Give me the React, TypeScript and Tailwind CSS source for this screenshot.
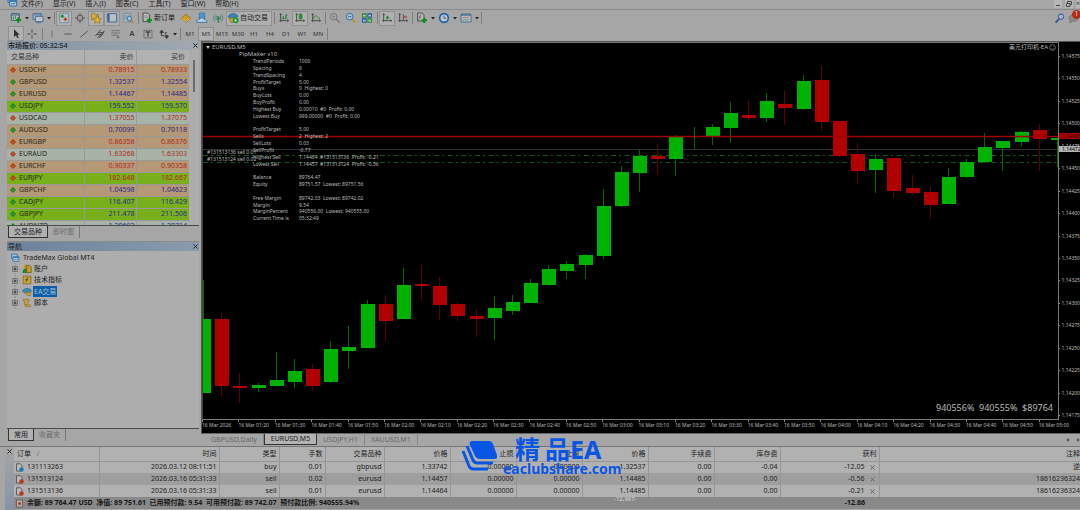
import React, { FunctionComponent, ReactNode, useState } from 'react'

type Tone = 'tan' | 'lime' | 'mist'

type Quote = {
  ask: string
  bid: string
  dir: 'up' | 'down'
  symbol: string
  tone: Tone
}

const quotes: Quote[] = [
  { symbol: 'USDCHF', bid: '0.78915', ask: '0.78933', dir: 'down', tone: 'tan' },
  { symbol: 'GBPUSD', bid: '1.32537', ask: '1.32554', dir: 'up', tone: 'tan' },
  { symbol: 'EURUSD', bid: '1.14467', ask: '1.14485', dir: 'up', tone: 'tan' },
  { symbol: 'USDJPY', bid: '159.552', ask: '159.570', dir: 'up', tone: 'lime' },
  { symbol: 'USDCAD', bid: '1.37055', ask: '1.37075', dir: 'down', tone: 'mist' },
  { symbol: 'AUDUSD', bid: '0.70099', ask: '0.70118', dir: 'up', tone: 'tan' },
  { symbol: 'EURGBP', bid: '0.86358', ask: '0.86376', dir: 'down', tone: 'tan' },
  { symbol: 'EURAUD', bid: '1.63268', ask: '1.63303', dir: 'down', tone: 'mist' },
  { symbol: 'EURCHF', bid: '0.90337', ask: '0.90358', dir: 'down', tone: 'tan' },
  { symbol: 'EURJPY', bid: '182.648', ask: '182.667', dir: 'down', tone: 'lime' },
  { symbol: 'GBPCHF', bid: '1.04598', ask: '1.04623', dir: 'up', tone: 'tan' },
  { symbol: 'CADJPY', bid: '116.407', ask: '116.429', dir: 'up', tone: 'lime' },
  { symbol: 'GBPJPY', bid: '211.478', ask: '211.506', dir: 'up', tone: 'lime' },
  { symbol: 'AUDNZD', bid: '1.20692', ask: '1.20714', dir: 'up', tone: 'mist' }
]

const tones: Record<Tone, string> = {
  lime: 'bg-[#78b01c]',
  mist: 'bg-[#a7b3a6]',
  tan: 'bg-[#b59876]'
}

const menus = [
  '文件(F)',
  '显示(V)',
  '插入(I)',
  '图表(C)',
  '工具(T)',
  '窗口(W)',
  '帮助(H)'
]

const periods = ['M1', 'M5', 'M15', 'M30', 'H1', 'H4', 'D1', 'W1', 'MN']

// wick top, body top, body bottom, wick bottom, 1 when the candle closed up
const candles = [
  [238, 277, 351, 351, 1],
  [271, 277, 344, 355, 0],
  [331, 344, 346, 361, 0],
  [341, 343, 346, 350, 1],
  [310, 338, 344, 344, 1],
  [317, 329, 340, 346, 1],
  [322, 327, 344, 349, 0],
  [299, 307, 340, 341, 1],
  [284, 305, 309, 327, 1],
  [258, 262, 306, 306, 1],
  [253, 262, 279, 299, 0],
  [226, 243, 277, 277, 1],
  [223, 242, 244, 259, 0],
  [235, 244, 263, 278, 0],
  [260, 262, 274, 279, 0],
  [267, 274, 277, 295, 0],
  [254, 266, 276, 298, 1],
  [253, 260, 269, 273, 1],
  [237, 241, 261, 261, 1],
  [223, 227, 243, 243, 1],
  [219, 222, 229, 237, 1],
  [212, 213, 223, 237, 1],
  [147, 164, 214, 217, 1],
  [124, 130, 164, 165, 1],
  [108, 114, 131, 150, 1],
  [102, 114, 117, 133, 0],
  [93, 95, 117, 134, 1],
  [85, 95, 95, 108, 1],
  [82, 85, 95, 103, 1],
  [60, 71, 86, 101, 1],
  [58, 73, 76, 78, 0],
  [51, 59, 76, 80, 1],
  [48, 62, 66, 83, 0],
  [33, 39, 67, 68, 1],
  [24, 38, 80, 89, 0],
  [79, 79, 114, 115, 0],
  [101, 112, 129, 142, 0],
  [112, 117, 128, 151, 1],
  [116, 116, 149, 156, 0],
  [133, 146, 151, 153, 0],
  [144, 150, 163, 177, 0],
  [126, 135, 162, 162, 1],
  [117, 120, 135, 136, 1],
  [91, 105, 120, 121, 1],
  [99, 99, 106, 129, 1],
  [89, 90, 100, 104, 1],
  [82, 88, 97, 129, 0],
  [96, 96, 98, 125, 1]
]

const info: [string, string][] = [
  ['TrendPeriods', '1000'],
  ['Spacing', '6'],
  ['TrendSpacing', '4'],
  ['ProfitTarget', '5.00'],
  ['Buys', '0  Highest: 0'],
  ['BuyLots', '0.00'],
  ['BuyProfit', '0.00'],
  ['Highest Buy', '0.00010  #0  Profit: 0.00'],
  ['Lowest Buy', '999.00000  #0  Profit: 0.00'],
  ['', ''],
  ['ProfitTarget', '5.00'],
  ['Sells', '2  Highest: 2'],
  ['SellLots', '0.03'],
  ['SellProfit', '-0.77'],
  ['Highest Sell', '1.14464  #131513136  Profit: -0.21'],
  ['Lowest Sell', '1.14457  #131513124  Profit: -0.56'],
  ['', ''],
  ['Balance', '89764.47'],
  ['Equity', '89751.57  Lowest: 89751.56'],
  ['', ''],
  ['Free Margin', '89742.03  Lowest: 89742.02'],
  ['Margin', '9.54'],
  ['MarginPercent', '940556.00  Lowest: 940555.00'],
  ['Current Time is', '05:32:49']
]

const prices = Array.from({ length: 17 }, (_, i) =>
  (1.14575 - i * 0.00025).toFixed(5)
)

const times = Array.from({ length: 24 }, (_, i) => {
  if (i === 0) {
    return '16 Mar 2026'
  }

  const minutes = 70 + i * 10
  const hour = String(Math.floor(minutes / 60)).padStart(2, '0')
  const minute = String(minutes % 60).padStart(2, '0')

  return `16 Mar ${hour}:${minute}`
})

const orders = [
  {
    id: '131113263',
    cells: ['2026.03.12 08:11:51', 'buy', '0.01', 'gbpusd', '1.33742', '0.00000', '0.00000', '1.32537', '0.00', '-0.04'],
    profit: '-12.05',
    note: '逆'
  },
  {
    id: '131513124',
    cells: ['2026.03.16 05:31:33', 'sell', '0.02', 'eurusd', '1.14457', '0.00000', '0.00000', '1.14485', '0.00', '0.00'],
    profit: '-0.56',
    note: '18616236324'
  },
  {
    id: '131513136',
    cells: ['2026.03.16 05:31:33', 'sell', '0.01', 'eurusd', '1.14464', '0.00000', '0.00000', '1.14485', '0.00', '0.00'],
    profit: '-0.21',
    note: '18616236324'
  }
]

const orderHeads = ['时间', '类型', '手数', '交易品种', '价格', '止损', '止盈', '价格', '手续费', '库存费']

// Icons are drawn on a 36 unit grid and shown at 12px
const Glyph: FunctionComponent<{ children: ReactNode; className?: string }> = ({
  children,
  className = 'size-3'
}) => (
  <svg className={`${className} shrink-0`} fill="none" viewBox="0 0 36 36">
    {children}
  </svg>
)

const Plus = ({ x, y }: { x: number; y: number }) => (
  <path
    d={`M${x - 8} ${y}h16M${x} ${y - 8}v16`}
    stroke="#0c8a1c"
    strokeWidth="6"
  />
)

const Axes = () => (
  <path
    d="M8 5v25M4 26h27M5 9l3-4 3 4M28 23l4 3-4 3"
    stroke="#4c4c4c"
    strokeWidth="3"
  />
)

const icons: Record<string, ReactNode> = {
  app: (
    <>
      <path d="M6 4h20v16H6z" fill="#a9c4dc" stroke="#2d6ea8" strokeWidth="3" />
      <path d="M11 13h21v17H11z" fill="#bccfdf" stroke="#2d6ea8" strokeWidth="3" />
      <path d="M11 16h21M15 25l5-3 4 2 5-4" stroke="#2d6ea8" strokeWidth="3" />
    </>
  ),
  newChart: (
    <>
      <path d="M4 5h24v20H4z" fill="#b9c2c6" stroke="#47606e" strokeWidth="3" />
      <path d="M5 9h22" stroke="#47606e" strokeWidth="3" />
      <path d="M10 14v8M16 12v8" stroke="#3c7a50" strokeWidth="3" />
      <Plus x={25} y={24} />
    </>
  ),
  profiles: (
    <>
      <path d="M3 5h25v17H3z" fill="#b4c1cb" stroke="#4a6a86" strokeWidth="3" />
      <path d="M10 13h23v16H10z" fill="#bcc6cd" stroke="#4a6a86" strokeWidth="3" />
      <path d="M4 9h23M13 32h14" stroke="#4a7aa8" strokeWidth="3" />
    </>
  ),
  market: (
    <>
      <path d="M5 4h26v28H5z" fill="#b8c0c4" stroke="#5c7c98" strokeWidth="2" />
      <path d="M7 13l6-6 6 6-6 6z" fill="#159030" />
      <path d="M16 22l6-6 6 6-6 6z" fill="#c43c20" />
    </>
  ),
  cross: (
    <>
      <circle cx="18" cy="18" r="9" stroke="#5a5a5a" strokeWidth="3" />
      <path d="M18 3v11M18 22v11M3 18h11M22 18h11" stroke="#5a5a5a" strokeWidth="3" />
    </>
  ),
  favorites: (
    <>
      <path d="M4 4h10l3 4h8v15H4z" fill="#d0a848" stroke="#8a6c20" strokeWidth="2" />
      <path d="M22 11l4 8 8 1-6 6 2 8-8-4-8 4 2-8-6-6 8-1z" fill="#dcb43c" stroke="#8a6c20" strokeWidth="2" />
    </>
  ),
  terminal: (
    <>
      <path d="M4 5h28v25H4z" fill="#b9bfc4" stroke="#3c6a9a" strokeWidth="3" />
      <path d="M8 6v23" stroke="#3c6a9a" strokeWidth="6" />
    </>
  ),
  tester: (
    <>
      <path d="M5 4h20v26H5z" fill="#b4bcc2" stroke="#5c7c98" strokeWidth="2" />
      <path d="M9 9v14M14 8v12M19 8v6" stroke="#6a7a88" strokeWidth="2" />
      <circle cx="22" cy="20" fill="#a8c2d6" r="7" stroke="#39709c" strokeWidth="3" />
      <path d="M27 26l6 7" stroke="#b08820" strokeWidth="5" />
    </>
  ),
  order: (
    <>
      <path d="M6 3h14l6 6v20H6z" fill="#b8bcbe" stroke="#4c4c4c" strokeWidth="3" />
      <path d="M10 12h10M10 17h10" stroke="#777" strokeWidth="2" />
      <Plus x={25} y={25} />
    </>
  ),
  gold: (
    <>
      <path d="M3 20L17 6l16 13-13 11z" fill="#d29a28" stroke="#8c6210" strokeWidth="2" />
      <path d="M5 21l14 6 12-8" stroke="#f0cc70" strokeWidth="2" />
    </>
  ),
  person: (
    <>
      <path d="M10 3h16v18H10z" fill="#4a9ad0" stroke="#2a6ca0" strokeWidth="2" />
      <path d="M3 31c-2-7 4-11 8-9 3-6 13-5 14 1 6-1 9 4 8 8z" fill="#c0d0de" stroke="#3a78ae" strokeWidth="3" />
    </>
  ),
  signal: (
    <>
      <path d="M10 6a15 15 0 000 23M27 6a15 15 0 010 23" stroke="#5a8a7a" strokeWidth="3" />
      <path d="M14 11a9 9 0 000 13M23 11a9 9 0 010 13" stroke="#4a7a98" strokeWidth="3" />
      <path d="M19 18v15" stroke="#2a8a3a" strokeWidth="4" />
      <circle cx="18.500" cy="17" fill="#2a8a3a" r="4" />
    </>
  ),
  auto: (
    <>
      <path d="M3 14c5-12 24-13 30-1l-8 5H8z" fill="#3c84b4" stroke="#28608a" strokeWidth="2" />
      <path d="M6 18h20l-4 13H12z" fill="#d2a030" stroke="#8c6a18" strokeWidth="2" />
      <circle cx="26" cy="25" fill="#1a9a34" r="9" />
      <path d="M23 20l7 5-7 5z" fill="#dde8dd" />
    </>
  ),
  bars: (
    <>
      <Axes />
      <path d="M16 12v10M13 20h3M24 7v14M24 9h4M20 19h4" stroke="#1c7c30" strokeWidth="3" />
    </>
  ),
  candle: (
    <>
      <Axes />
      <path d="M20 3v22" stroke="#167a28" strokeWidth="2" />
      <path d="M16 7h8v13h-8z" fill="#1c9a30" stroke="#167a28" strokeWidth="2" />
    </>
  ),
  line: (
    <>
      <Axes />
      <path d="M10 21c4-10 8-12 11-8s5 6 9 6" stroke="#2a8a3a" strokeWidth="3" />
    </>
  ),
  zoomIn: (
    <>
      <path d="M21 21l11 11" stroke="#777" strokeWidth="4" />
      <circle cx="14" cy="14" r="10" stroke="#777" strokeWidth="3" />
      <path d="M9 14h10M14 9v10" stroke="#777" strokeWidth="2" />
    </>
  ),
  zoomOut: (
    <>
      <path d="M21 21l11 11" stroke="#b8902c" strokeWidth="5" />
      <circle cx="14" cy="14" fill="#a9c0d2" r="10" stroke="#2f70a8" strokeWidth="3" />
      <path d="M9 14h10" stroke="#2f70a8" strokeWidth="3" />
    </>
  ),
  tile: (
    <>
      <path d="M3 4h14v13H3zM19 19h14v13H19z" fill="#2c8c2c" />
      <path d="M19 4h14v13H19zM3 19h14v13H3z" fill="#2458a8" />
      <path d="M6 11h8M22 11h8M6 26h8M22 26h8" stroke="#b8c4c8" strokeWidth="5" />
    </>
  ),
  scroll: (
    <>
      <Axes />
      <path d="M16 10l10 7-10 7z" fill="#1c8c34" />
    </>
  ),
  shift: (
    <>
      <Axes />
      <path d="M19 7v17" stroke="#555" strokeWidth="3" />
      <path d="M31 15h-9M26 11l-4 4 4 4" stroke="#a84428" strokeWidth="3" />
    </>
  ),
  indicator: (
    <>
      <path d="M5 3h14l5 5v19H5z" fill="#b8bcbe" stroke="#4c4c4c" strokeWidth="3" />
      <path d="M17 9c-5-2-5 3-5 6s0 8-4 7M8 15h8" stroke="#555" strokeWidth="2" />
      <Plus x={25} y={25} />
    </>
  ),
  clock: (
    <>
      <circle cx="18" cy="18" fill="#b8c6d2" r="13" stroke="#1f5fa4" strokeWidth="5" />
      <path d="M18 11v8h6" stroke="#333" strokeWidth="2" />
    </>
  ),
  template: (
    <>
      <path d="M3 6h30v24H3z" fill="#b8c0c6" stroke="#4c6e8c" strokeWidth="3" />
      <path d="M3 9h30" stroke="#3c6a9a" strokeWidth="4" />
      <path d="M8 18l5-2 5 2 8-3" stroke="#a84830" strokeWidth="2" />
      <path d="M8 25l6-2 5 2 8-3" stroke="#2a8a3a" strokeWidth="2" />
    </>
  ),
  arrow: (
    <path d="M12 4v23l6-5 4 9 4-2-4-9h7z" fill="#2c2c2c" />
  ),
  crosshair: (
    <path d="M18 4v10M18 22v10M4 18h10M22 18h10" stroke="#4c4c4c" strokeWidth="3" />
  ),
  vertical: <path d="M18 7v22" stroke="#555" strokeWidth="2" />,
  horizontal: <path d="M7 18h22" stroke="#555" strokeWidth="3" />,
  trend: <path d="M7 28L29 9" stroke="#555" strokeWidth="3" />,
  channel: (
    <path
      d="M4 24L20 6M10 30L32 8M8 20h18M12 14h18M16 30L28 16"
      stroke="#4c4c4c"
      strokeWidth="3"
    />
  ),
  fibo: (
    <>
      <path d="M4 8h27M4 15h27M4 22h20" stroke="#5c5c5c" strokeWidth="2" />
      <path d="M24 22v10M20 28h9" stroke="#5c5c5c" strokeWidth="2" />
    </>
  ),
  label: (
    <>
      <path d="M6 7h24v23H6z" stroke="#555" strokeDasharray="3 2" strokeWidth="3" />
      <path d="M11 12h14M18 12v14" stroke="#444" strokeWidth="4" />
    </>
  ),
  arrows: (
    <>
      <path d="M4 13l7-8 7 8-7 4zM19 24l7-4 7 4-7 9z" fill="#3c3c3c" />
      <path d="M10 16v7h9M22 20v-6h5" stroke="#444" strokeWidth="3" />
    </>
  ),
  search: (
    <>
      <path d="M15 21L5 32" stroke="#2c50a0" strokeWidth="5" />
      <circle cx="21" cy="14" fill="#a9b6cc" r="8" stroke="#2c50a0" strokeWidth="3" />
    </>
  ),
  chat: (
    <path
      d="M3 18c0-6 6-10 14-10s13 4 13 10-6 10-13 10c-2 0-4 0-5 1l-7 3 2-6c-3-2-4-5-4-8z"
      fill="#8c8c8c"
      stroke="#666"
      strokeWidth="2"
    />
  ),
  account: (
    <>
      <circle cx="14" cy="10" fill="#c49420" r="8" />
      <path d="M2 32c0-12 4-15 11-15s9 4 9 15z" fill="#1e8a30" />
      <path d="M17 5h10l6 6v20H17z" fill="#c89c28" stroke="#7a5c10" strokeWidth="3" />
    </>
  ),
  script: (
    <>
      <path d="M5 5h20v6h-4v14H9V11H5z" fill="#c8a040" stroke="#85671a" strokeWidth="2" />
      <path d="M13 25h18v6H13z" fill="#d0ac50" stroke="#85671a" strokeWidth="2" />
    </>
  ),
  func: (
    <>
      <path d="M4 4h28v28H4z" fill="#c8a63c" stroke="#86691c" strokeWidth="3" />
      <path d="M23 10c-5-2-6 2-6 6s0 9-4 9M12 17h10" stroke="#4c3c10" strokeWidth="3" />
    </>
  ),
  expert: (
    <>
      <path d="M1 15C8 2 27 1 35 13l-11 8H9z" fill="#3888b0" stroke="#24607e" strokeWidth="2" />
      <path d="M13 19h19l-3 13-14-4z" fill="#c89c38" stroke="#80621c" strokeWidth="2" />
    </>
  ),
  balance: (
    <>
      <path d="M6 4h24v28H6z" fill="#b9b0a8" stroke="#5a5048" strokeWidth="3" />
      <circle cx="18" cy="18" fill="#b83418" r="6" />
    </>
  )
}

const Tool = ({
  icon,
  pressed = false
}: {
  icon: string
  pressed?: boolean
}) => (
  <button
    aria-label={icon}
    className={`flex h-[15px] w-4 shrink-0 items-center justify-center ${
      pressed ? 'border border-[#909090] bg-[#b0b0b0]' : ''
    }`}>
    <Glyph>{icons[icon]}</Glyph>
  </button>
)

const Caret = () => (
  <svg className="h-4 w-[6px] shrink-0" viewBox="0 0 6 16">
    <path d="M1 7h4L3 9.500z" fill="#222" />
  </svg>
)

const Divider = ({ className }: { className: string }) => (
  <span className={`flex h-3 shrink-0 justify-center ${className}`}>
    <span className="w-px bg-[#808080]" />
  </span>
)

const CloseButton = ({ className = 'text-[#1c1c1c]' }: { className?: string }) => (
  <button
    aria-label="关闭"
    className={`flex size-2 items-center justify-center ${className}`}>
    <svg className="size-[5px]" viewBox="0 0 5 5">
      <path d="M.5.5l4 4M4.500.500l-4 4" stroke="currentColor" />
    </svg>
  </button>
)

const Toolbars = () => (
  <>
    <nav className="flex h-[10px] shrink-0 items-start border-b border-[#8a8a8a] pl-[6px]">
      <Glyph className="-mt-1 size-3">{icons.app}</Glyph>
      <div className="flex flex-1 gap-[10px] pl-[3px]">
        {menus.map((menu) => (
          <button className="leading-[7px] whitespace-nowrap text-[#222]" key={menu}>
            {menu}
          </button>
        ))}
      </div>
      <div className="flex h-2 gap-[3px] text-[#3c3c3c]">
        <button aria-label="最小化" className="flex w-2 items-end justify-center bg-[#b6b6b6] pb-[2px]">
          <span className="h-px w-1 bg-[#444]" />
        </button>
        <button aria-label="还原" className="flex w-2 items-center justify-center bg-[#b6b6b6]">
          <svg className="size-[6px]" fill="none" viewBox="0 0 6 6">
            <path d="M1.500 2V.5h4v3H4M.5 2.500H4v3H.5z" stroke="#444" />
          </svg>
        </button>
        <button aria-label="关闭窗口" className="flex w-1 items-center bg-[#b6b6b6]">
          ×
        </button>
      </div>
    </nav>
    <div className="flex h-4 shrink-0 items-center pl-2">
      <Tool icon="newChart" />
      <Caret />
      <Tool icon="profiles" />
      <Caret />
      <Divider className="w-1" />
      <Tool icon="market" pressed />
      <Tool icon="cross" />
      <Tool icon="favorites" pressed />
      <Tool icon="terminal" pressed />
      <Tool icon="tester" />
      <Divider className="w-[5px]" />
      <button className="flex w-[37px] shrink-0 items-center gap-px whitespace-nowrap text-[#181818]">
        <Glyph>{icons.order}</Glyph>
        新订单
      </button>
      <Tool icon="gold" />
      <Tool icon="person" />
      <Tool icon="signal" />
      <button className="flex h-[15px] w-[46px] shrink-0 items-center gap-px border border-[#909090] bg-[#b0b0b0] whitespace-nowrap text-[#181818]">
        <Glyph>{icons.auto}</Glyph>
        自动交易
      </button>
      <Divider className="w-1" />
      <Tool icon="bars" />
      <Tool icon="candle" pressed />
      <Tool icon="line" />
      <Divider className="w-[3px]" />
      <Tool icon="zoomIn" />
      <Tool icon="zoomOut" />
      <Tool icon="tile" />
      <Divider className="w-1" />
      <Tool icon="scroll" pressed />
      <Tool icon="shift" />
      <Divider className="w-[3px]" />
      <Tool icon="indicator" />
      <Caret />
      <Tool icon="clock" />
      <Caret />
      <Tool icon="template" />
      <Caret />
      <Divider className="w-[3px]" />
      <div className="ml-auto flex">
        <Tool icon="search" />
        <button aria-label="消息" className="relative flex h-[15px] w-3 items-center">
          <Glyph>{icons.chat}</Glyph>
          <span className="absolute -top-px left-1 size-[9px] rounded-full bg-[#b42c18] text-center text-[#e0d0d0]">
            1
          </span>
        </button>
      </div>
    </div>
    <div className="flex h-[15px] shrink-0 items-center pl-2">
      <Tool icon="arrow" pressed />
      <Tool icon="crosshair" />
      <Divider className="w-1" />
      <Tool icon="vertical" />
      <Tool icon="horizontal" />
      <Tool icon="trend" />
      <Tool icon="channel" />
      <Tool icon="fibo" />
      <button className="w-4 text-center font-bold text-[#444]">A</button>
      <Tool icon="label" />
      <Tool icon="arrows" />
      <Caret />
      <Divider className="w-1" />
      {periods.map((period) => (
        <button
          className={`h-[14px] w-4 text-center text-[6px] font-medium text-[#444] ${
            period === 'M5' ? 'border border-[#909090] bg-[#b0b0b0]' : ''
          }`}
          key={period}>
          {period}
        </button>
      ))}
      <Divider className="w-[3px]" />
    </div>
  </>
)

const MarketWatch = () => (
  <section>
    <header className="flex h-[9px] items-center justify-between bg-linear-to-r from-[#8394a4] to-[#a2a8ae] pl-px font-medium text-[#222]">
      <h2>市场报价: 05:32:54</h2>
      <CloseButton />
    </header>
    <div className="flex h-44 items-start overflow-hidden border-b border-[#4a4a4a] bg-[#adadad]">
      <table className="w-[182px] table-fixed border-collapse">
        <colgroup>
          <col className="w-[77px]" />
          <col className="w-[52px]" />
          <col className="w-[53px]" />
        </colgroup>
        <thead>
          <tr className="h-[14px] bg-[#b1b1b1] text-[#333]">
            <th className="border-r border-[#999] p-0 pl-1 text-left font-normal">交易品种</th>
            <th className="border-r border-[#999] p-0 pr-[2px] text-right font-normal">卖价</th>
            <th className="p-0 pr-1 text-right font-normal">买价</th>
          </tr>
        </thead>
        <tbody>
          {quotes.map(({ ask, bid, dir, symbol, tone }) => {
            const color = dir === 'up' ? 'text-[#28288c]' : 'text-[#b0281c]'

            return (
              <tr className={`h-3 ${tones[tone]}`} key={symbol}>
                <td className="border-t border-r border-[#999] p-0">
                  <span className="flex items-center gap-[3px] pl-[3px] text-[#2a2a1c]">
                    <svg className="size-[6px]" viewBox="0 0 6 6">
                      <path
                        d="M3 0l3 3-3 3-3-3z"
                        fill={dir === 'up' ? '#1c8420' : '#b43c18'}
                      />
                      <circle cx="3" cy="3" fill="#b8c0a0" r=".600" />
                    </svg>
                    {symbol}
                  </span>
                </td>
                <td className={`border-t border-r border-[#999] p-0 pr-px text-right ${color}`}>
                  {bid}
                </td>
                <td className={`border-t border-[#999] p-0 pr-[2px] text-right ${color}`}>
                  {ask}
                </td>
              </tr>
            )
          })}
        </tbody>
      </table>
      <div className="mt-[10px] ml-1 h-8 w-[2px] bg-[#6c6c6c]" />
    </div>
    <div className="flex h-[14px] items-start pl-px">
      <button className="h-3 w-10 border border-t-0 border-[#333] bg-[#b1b1b1] text-[#1c1c1c]">
        交易品种
      </button>
      <button className="h-3 w-8 border-r border-[#777] text-[#6c6c6c]">即时图</button>
    </div>
  </section>
)

const tree = [
  { icon: 'account', name: '账户' },
  { icon: 'func', name: '技术指标' },
  { icon: 'expert', name: 'EA交易' },
  { icon: 'script', name: '脚本' }
]

const Navigator = () => {
  const [selected, setSelected] = useState('EA交易')

  return (
    <section className="mt-px flex min-h-0 flex-1 flex-col">
      <header className="flex h-[10px] items-center justify-between border-t border-[#8a8a8a] bg-linear-to-r from-[#6c8299] to-[#8a9bad] pl-px text-[#222]">
        <h2>导航</h2>
        <CloseButton />
      </header>
      <div className="min-h-0 flex-1 border-b border-[#4a4a4a] bg-[#adadad] pt-px">
        <ul className="grid h-[57px] grid-rows-5 text-[#222]">
          <li className="flex items-center gap-[3px] pl-[3px]">
            <Glyph className="size-[10px]">{icons.app}</Glyph>
            <span>TradeMax Global MT4</span>
          </li>
          {tree.map(({ icon, name }) => (
            <li className="flex items-center gap-px pl-[5px]" key={name}>
              <svg className="h-3 w-[9px]" fill="none" viewBox="0 0 9 12">
                <path d="M3 0v12M5 6h4" stroke="#858585" strokeDasharray="1 1" />
                <path d="M.5 3.500h5v5h-5z" fill="#a6a6a6" stroke="#777" />
                <path d="M1.500 6h3M3 4.500v3" stroke="#333" />
              </svg>
              <Glyph className="size-[10px]">{icons[icon]}</Glyph>
              <button
                className={`h-[11px] px-px ${
                  selected === name ? 'bg-[#0a5ca8] text-[#a8c0d8]' : ''
                }`}
                onClick={() => setSelected(name)}>
                {name}
              </button>
            </li>
          ))}
        </ul>
      </div>
      <div className="flex h-[17px] shrink-0 items-start pl-px">
        <button className="h-3 w-[26px] border border-t-0 border-[#333] bg-[#b1b1b1] text-[#1c1c1c]">
          常用
        </button>
        <button className="h-3 w-8 border-r border-[#777] text-[#6c6c6c]">收藏夹</button>
      </div>
    </section>
  )
}

// The plot fills the pane, one candle takes 18.17 of its 855 units
const Plot = () => (
  <svg
    className="absolute inset-0 size-full"
    preserveAspectRatio="none"
    viewBox="0 1 855 376">
    <path
      d="M0 113.500h855M0 120.500h855"
      stroke="#10581a"
      strokeDasharray="5 3 2 3.600"
    />
    <path d="M0 107.500h855" stroke="#2c3236" />
    {candles.map(([high, top, bottom, low, up], i) => {
      const x = Math.round(i * 18.17)
      const color = up ? '#00b200' : '#b20000'

      return (
        <g key={i}>
          <path d={`M${x + 0.5} ${high}V${low}`} stroke={up ? '#006c00' : '#5c0000'} />
          <rect
            fill={color}
            height={Math.max(bottom - top, 1)}
            width={top === bottom ? 1 : 14}
            x={top === bottom ? x : x - 6}
            y={top}
          />
        </g>
      )
    })}
    <path d="M0 94.500h855" stroke="#9c0000" strokeWidth="1.600" />
  </svg>
)

const chartTabs = ['GBPUSD,Daily', 'EURUSD,M5', 'USDJPY,H1', 'XAUUSD,M1']

const Chart = () => {
  const [tab, setTab] = useState('EURUSD,M5')

  return (
    <section className="flex min-w-0 flex-1 flex-col">
      <div className="flex min-h-0 flex-1 flex-col border-t border-l border-[#555] bg-black text-[5px] leading-[7px] text-[#bababa]">
        <div className="flex min-h-0 flex-1">
          <div className="relative min-w-0 flex-1 overflow-hidden border border-[#7a7a7a] border-l-[#444]">
            <Plot />
            <div className="absolute top-[106px] left-1 whitespace-pre">
              <p>#131513136 sell 0.01</p>
              <p>#131513124 sell 0.02</p>
            </div>
            <p className="absolute top-px left-[3px] flex items-center gap-[2px] text-[6px]">
              <svg className="h-[3px] w-1" viewBox="0 0 4 3">
                <path d="M0 0h4L2 3z" fill="#c0c0c0" />
              </svg>
              EURUSD,M5
            </p>
            <p className="absolute top-2 left-9 text-[6px]">PipMaker v10</p>
            <dl className="absolute top-[15px] left-[50px] grid h-[164px] auto-rows-fr content-stretch whitespace-pre">
              {info.map(([name, value], i) => (
                <div className="flex" key={i}>
                  <dt className="w-[46px]">{name}</dt>
                  <dd>{value}</dd>
                </div>
              ))}
            </dl>
            <p className="absolute top-px right-[2px] flex items-center gap-px text-[6px]">
              美元打印机-EA
              <svg className="size-[7px]" fill="none" viewBox="0 0 12 12">
                <circle cx="6" cy="6" r="5" stroke="#a8a8a8" />
                <path d="M3.500 7.500c1 2 4 2 5 0M4 4v1M8 4v1" stroke="#a8a8a8" />
              </svg>
            </p>
            <p className="absolute right-[5px] bottom-[5px] text-[9px] leading-3 whitespace-pre">
              940556%  940555%  $89764
            </p>
          </div>
          <div className="relative w-[21px] shrink-0 overflow-hidden">
            <ul className="flex h-full flex-col justify-between pt-[11px] pb-px">
              {prices.map((price) => (
                <li className="flex items-center gap-[2px]" key={price}>
                  <span className="h-px w-px bg-[#888]" />
                  {price}
                </li>
              ))}
            </ul>
            <span className="absolute top-[91px] left-0 w-full bg-[#a80000] pl-[3px] leading-[6px] text-[#300]">
              1.14485
            </span>
            <span className="absolute top-[104px] left-0 w-full bg-[#b4b4b4] pl-[3px] leading-[6px] text-black">
              1.14472
            </span>
          </div>
        </div>
        <ul className="flex h-[13px] shrink-0 pr-[5px]">
          {times.map((time) => (
            <li className="min-w-0 flex-1 whitespace-nowrap" key={time}>
              <span className="block h-[2px] w-px bg-[#888]" />
              {time}
            </li>
          ))}
        </ul>
      </div>
      <div className="flex h-[13px] shrink-0 items-start border-t border-[#666]">
        {chartTabs.map((name) => (
          <button
            className={`h-[11px] px-[6px] whitespace-nowrap first:pl-[10px] ${
              tab === name
                ? 'border border-t-0 border-[#333] bg-[#b3b3b3] text-[#1c1c1c]'
                : 'border-r border-[#888] text-[#666]'
            }`}
            key={name}
            onClick={() => setTab(name)}>
            {name}
          </button>
        ))}
        <div className="ml-auto flex h-[11px] items-center gap-2">
          <svg className="h-1 w-[3px]" viewBox="0 0 3 4">
            <path d="M3 0v4L0 2z" fill="#555" />
          </svg>
          <svg className="h-1 w-[3px]" viewBox="0 0 3 4">
            <path d="M0 0v4l3-2z" fill="#555" />
          </svg>
        </div>
      </div>
    </section>
  )
}

const OrderIcon = ({ buy }: { buy: boolean }) => (
  <Glyph className="size-[9px]">
    <path d="M6 3h15l7 7v22H6z" fill="#b9b9b9" stroke="#444" strokeWidth="3" />
    <circle cx="26" cy="26" fill={buy ? '#1f78b8' : '#b8381c'} r="9" />
  </Glyph>
)

const cell = 'border-r border-[#969696] p-0 pr-[2px] text-right'

const Terminal = () => (
  <section className="relative flex h-16 shrink-0 border-t border-[#777] pl-[5px]">
    <div className="flex w-[9px] shrink-0 flex-col bg-linear-to-b from-[#a6a6a6] to-[#8494a6]">
      <CloseButton />
    </div>
    <div className="min-w-0 flex-1 overflow-hidden">
      <table className="w-full table-fixed border-collapse whitespace-nowrap text-[#222]">
        <colgroup>
          <col className="w-[85px]" />
          <col className="w-[120px]" />
          <col className="w-[60px]" />
          <col className="w-[46px]" />
          <col className="w-[59px]" />
          <col className="w-[66px]" span={6} />
          <col className="w-[99px]" />
          <col />
        </colgroup>
        <thead>
          <tr className="h-[14px] border-b border-[#969696] bg-[#b1b1b1]">
            <th className="border-r border-[#969696] p-0 pl-[3px] text-left font-normal">
              订单 <span className="pl-1 text-[#777]">/</span>
            </th>
            {orderHeads.map((head, i) => (
              <th className={`${cell} font-normal`} key={i}>
                {head}
              </th>
            ))}
            <th className={`${cell} font-normal`}>获利</th>
            <th className="p-0 text-right font-normal">注释</th>
          </tr>
        </thead>
        <tbody>
          {orders.map(({ cells, id, note, profit }) => (
            <tr className="h-3 bg-[#b1b1b1] even:bg-[#9e9e9e]" key={id}>
              <td className="border-r border-[#969696] p-0">
                <span className="flex items-center gap-[3px] pl-px">
                  <OrderIcon buy={cells[1] === 'buy'} />
                  {id}
                </span>
              </td>
              {cells.map((value, i) => (
                <td className={cell} key={i}>
                  {value}
                </td>
              ))}
              <td className={cell}>
                <span className="flex items-center justify-end gap-1">
                  {profit}
                  <CloseButton className="text-[#666]" />
                </span>
              </td>
              <td className="p-0 text-right">{note}</td>
            </tr>
          ))}
        </tbody>
        <tfoot>
          <tr className="h-3 bg-[#898989] font-bold text-[#161616]">
            <td className="p-0" colSpan={11}>
              <span className="flex items-center gap-[3px] pl-px">
                <Glyph className="size-[9px]">{icons.balance}</Glyph>
                <span className="whitespace-pre">
                  余额: 89 764.47 USD  净值: 89 751.61  已用预付款: 9.54  可用预付款: 89
                  742.07  预付款比例: 940555.94%
                </span>
              </span>
            </td>
            <td className="p-0 pr-[14px] text-right">-12.86</td>
            <td />
          </tr>
        </tfoot>
      </table>
    </div>
  </section>
)

const Watermark = () => (
  <div className="pointer-events-none absolute bottom-[34px] left-[461px] flex items-center gap-[6px] font-bold text-[#0a56e4]">
    <svg className="h-[30px] w-9" viewBox="0 0 36 30">
      <path d="M11 0h17c2 0 3 1 4 3l4 11c1 2 0 4-2 4H19c-2 0-4-1-5-3L9 4c-1-2 0-4 2-4z" fill="#0a56e4" />
      <path
        d="M6 5l6 14c1 2 2 3 4 3h16M2 10l6 15c1 2 2 3 4 3h15"
        fill="none"
        stroke="#0a56e4"
        strokeWidth="3"
      />
    </svg>
    <div>
      <p className="flex items-center gap-[5px] pl-3 text-[25px] leading-[26px]">
        <span>精</span>
        <span>品EA</span>
      </p>
      <p className="text-[14px] leading-[14px]">eaclubshare.com</p>
    </div>
  </div>
)

const App = () => (
  <div className="relative flex h-screen flex-col overflow-hidden bg-[#a6a6a6] font-['Noto_Sans','Noto_Sans_CJK_SC',sans-serif] text-[7px] leading-[8px]">
    <Toolbars />
    <main className="flex min-h-0 flex-1">
      <aside className="flex w-[201px] shrink-0 flex-col pr-[2px] pl-[7px]">
        <MarketWatch />
        <Navigator />
      </aside>
      <Chart />
    </main>
    <Terminal />
    <Watermark />
    <span className="absolute bottom-[7px] left-[614px] text-[6px] text-[#dcdcdc]">
      -12,967-
    </span>
  </div>
)

export default App
